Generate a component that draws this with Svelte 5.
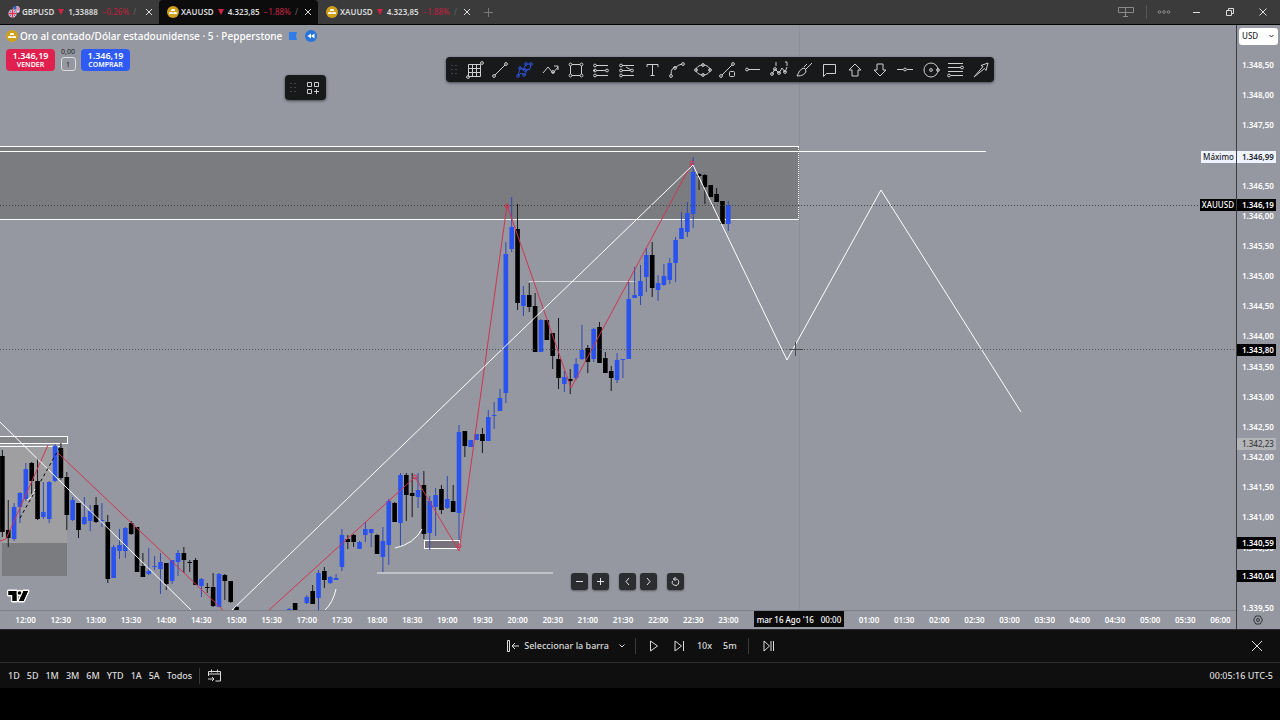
<script>
    const tabs = [
        { symbol: "GBPUSD", price: "1,33888", change: "−0.26%", icon: "gbp" },
        { symbol: "XAUUSD", price: "4.323,85", change: "−1.88%", icon: "gold" },
        { symbol: "XAUUSD", price: "4.323,85", change: "−1.88%", icon: "gold" },
    ];
    let activeTab = $state(1);
    let quantity = $state("1");

    const ranges = ["1D", "5D", "1M", "3M", "6M", "YTD", "1A", "5A", "Todos"];

    // one column per half hour, empty where the date label lies on top
    const times = [
        "12:00", "12:30", "13:00", "13:30", "14:00", "14:30", "15:00", "15:30",
        "17:00", "17:30", "18:00", "18:30", "19:00", "19:30", "20:00", "20:30",
        "21:00", "21:30", "22:00", "22:30", "23:00", "", "", "",
        "01:00", "01:30", "02:00", "02:30", "03:00", "03:30", "04:00", "04:30",
        "05:00", "05:30", "06:00",
    ];

    const TOP_PRICE = 1348.5;
    const PX_PER_UNIT = 60.33;

    function format(price) {
        return "1." + (price - 1000).toFixed(2).replace(".", ",");
    }

    function priceY(price) {
        return 41 + (TOP_PRICE - price) * PX_PER_UNIT;
    }

    const prices = Array.from({ length: 19 }, (_, i) => TOP_PRICE - i * 0.5);

    const badges = [
        { price: 1346.99, kind: "high", label: "Máximo" },
        { price: 1346.19, kind: "dark", label: "XAUUSD" },
        { price: 1343.8, kind: "dark" },
        { price: 1342.23, kind: "muted" },
        { price: 1340.59, kind: "dark" },
        { price: 1340.04, kind: "dark" },
    ];

    // slot, high, body top, body bottom, low, up
    const candles = [
        [0, 450, 456, 532, 537, 0], [1, 500, 530, 538, 547, 0],
        [2, 503, 507, 539, 541, 1], [3, 492, 493, 507, 523, 1],
        [4, 463, 469, 499, 501, 1], [5, 462, 463, 481, 494, 0],
        [6, 458, 481, 519, 520, 0], [7, 482, 512, 517, 519, 1],
        [8, 481, 482, 519, 523, 1], [9, 444, 446, 481, 482, 1],
        [10, 443, 448, 478, 480, 0], [11, 472, 477, 515, 530, 0],
        [12, 497, 500, 520, 521, 1], [13, 503, 503, 530, 538, 0],
        [14, 497, 517, 524, 525, 1], [15, 505, 511, 521, 531, 1],
        [16, 497, 505, 522, 523, 0], [17, 503, 520, 521, 527, 1],
        [18, 515, 522, 579, 583, 0], [19, 545, 547, 578, 578, 1],
        [20, 529, 545, 551, 559, 1], [21, 527, 528, 551, 558, 1],
        [22, 521, 523, 534, 535, 0], [23, 527, 527, 572, 572, 0],
        [24, 553, 566, 577, 577, 0], [25, 548, 571, 574, 575, 1],
        [26, 556, 566, 567, 570, 1], [27, 553, 562, 569, 594, 1],
        [28, 563, 563, 584, 590, 0], [29, 560, 560, 581, 584, 1],
        [30, 550, 553, 562, 576, 1], [31, 547, 553, 560, 573, 0],
        [32, 560, 562, 563, 572, 0], [33, 558, 560, 585, 585, 0],
        [34, 578, 579, 586, 597, 1], [35, 583, 587, 588, 593, 0],
        [36, 573, 587, 606, 607, 0], [37, 573, 574, 607, 607, 1],
        [38, 574, 575, 581, 600, 0], [39, 581, 581, 602, 603, 0],
        [40, 606, 607, 612, 612, 0], [49, 608, 609, 611, 611, 1],
        [50, 603, 603, 611, 611, 0], [51, 610, 610, 611, 611, 0],
        [52, 595, 597, 603, 604, 1], [53, 585, 591, 604, 604, 0],
        [54, 570, 573, 598, 610, 1], [55, 567, 571, 580, 588, 0],
        [56, 576, 577, 583, 584, 1], [57, 574, 578, 580, 580, 1],
        [58, 529, 535, 567, 571, 1], [59, 535, 539, 542, 549, 0],
        [60, 534, 535, 542, 547, 0], [61, 541, 542, 549, 549, 1],
        [62, 522, 529, 535, 542, 1], [63, 529, 529, 533, 547, 1],
        [64, 534, 535, 554, 554, 0], [65, 527, 541, 557, 572, 1],
        [66, 499, 501, 545, 565, 1], [67, 502, 503, 522, 522, 0],
        [68, 473, 475, 523, 546, 1], [69, 473, 475, 495, 521, 0],
        [70, 473, 493, 496, 517, 0], [71, 473, 490, 497, 508, 1],
        [72, 471, 485, 534, 539, 0], [73, 496, 501, 533, 550, 1],
        [74, 488, 495, 507, 536, 1], [75, 485, 489, 510, 514, 0],
        [76, 476, 499, 508, 509, 1], [77, 485, 501, 512, 512, 0],
        [78, 425, 432, 513, 540, 1], [79, 431, 431, 446, 457, 0],
        [80, 440, 440, 447, 447, 1], [81, 434, 434, 440, 440, 1],
        [82, 428, 434, 441, 453, 0], [83, 410, 417, 441, 441, 1],
        [84, 402, 415, 416, 429, 1], [85, 389, 398, 411, 411, 1],
        [86, 242, 254, 393, 403, 1], [87, 197, 227, 249, 252, 1],
        [88, 204, 229, 303, 310, 0], [89, 286, 295, 306, 316, 1],
        [90, 283, 295, 307, 312, 0], [91, 293, 306, 352, 352, 0],
        [92, 319, 320, 352, 352, 1], [93, 320, 320, 340, 340, 0],
        [94, 333, 333, 356, 369, 0], [95, 318, 359, 378, 389, 0],
        [96, 371, 377, 384, 392, 1], [97, 369, 379, 381, 394, 0],
        [98, 358, 364, 378, 380, 1], [99, 325, 350, 359, 360, 1],
        [100, 345, 348, 362, 373, 0], [101, 328, 329, 359, 362, 1],
        [102, 322, 327, 363, 363, 0], [103, 352, 358, 373, 373, 0],
        [104, 366, 371, 378, 391, 0], [105, 353, 360, 380, 383, 1],
        [106, 359, 359, 360, 378, 1], [107, 282, 299, 359, 359, 1],
        [108, 267, 295, 298, 298, 1], [109, 265, 281, 296, 305, 1],
        [110, 248, 255, 277, 292, 1], [111, 242, 255, 288, 297, 0],
        [112, 275, 283, 290, 301, 1], [113, 264, 276, 285, 286, 1],
        [114, 258, 263, 280, 284, 1], [115, 237, 240, 263, 282, 1],
        [116, 212, 228, 239, 239, 1], [117, 202, 213, 232, 237, 1],
        [118, 157, 172, 214, 228, 1], [119, 173, 174, 176, 190, 0],
        [120, 174, 175, 187, 204, 0], [121, 185, 185, 197, 197, 0],
        [122, 188, 194, 202, 202, 0], [123, 201, 201, 224, 224, 0],
        [124, 201, 205, 224, 231, 1],
    ];

    function slotX(slot) {
        return 2.4 + slot * 5.854;
    }

    const tools = [
        { name: "Caja de Gann", d: "M2.500 3.500h12v12h-12zM2.500 7.500h12M2.500 11.500h12M6.500 3.500v12M10.500 3.500v12", dots: [[2, 16], [16, 2]] },
        { name: "Línea de tendencia", d: "M4 14L14 4", dots: [[3, 15], [15, 3]] },
        { name: "Patrón", d: "M2 15L4 7L7 9L10 3L15 3L14 8L11 9L9 14L5 12ZM4 7L10 9L14 8", dots: [[4, 7], [10, 3], [15, 3], [9, 9], [2, 15], [8, 14]], active: true },
        { name: "Polilínea", d: "M1 12L6 6L11 12L16 6M12 5h4v4", dots: [[11, 11]] },
        { name: "Rectángulo", d: "M5 3.500h8M5 14.500h8M3.500 5v8M14.500 5v8", dots: [[3.5, 3.5], [14.5, 3.5], [3.5, 14.5], [14.5, 14.5]] },
        { name: "Retroceso de Fibonacci", d: "M4 4.500h12M4 9.500h10M4 14.500h12M1 9.500h2", dots: [[3, 4.5], [3, 9.5], [15, 9.5], [3, 14.5]] },
        { name: "Extensión de Fibonacci", d: "M4 4.500h12M4 9.500h8M4 14.500h12M8 6L13 9", dots: [[3, 4.5], [3, 9.5], [14, 9.5], [3, 14.5]] },
        { name: "Texto", d: "M4 6V3.500h11v2.500M9.500 3.500v11M7.500 14.500h4", dots: [] },
        { name: "Curva", d: "M3 14Q3 6 8 6M8 6Q10 4 14 3", dots: [[3, 15], [7, 7], [15, 3]] },
        { name: "Elipse", d: "M2 9a7 5 0 0 1 14 0a7 5 0 0 1-14 0", dots: [[9, 4], [9, 14], [2, 9], [16, 9]] },
        { name: "Trazado con forma", d: "M3 14L13 4M11.500 10.500h3q1 0 1 1v3q0 1-1 1h-3q-1 0-1-1v-3q0-1 1-1z", dots: [[2, 15], [14, 3]] },
        { name: "Rayo horizontal", d: "M4 8.500h12", dots: [[3, 8.5]] },
        { name: "Onda de Elliott", d: "M2 13L5 8L9 12L12 7L15 11L17 6M6 1v4M15 1h2v4", dots: [[2, 13], [5, 8], [9, 12], [15, 11]] },
        { name: "Pincel", d: "M2 15Q4 9 8 7Q11 7 11 10Q10 15 2 15M11 8L17 2M9 6L12 3", dots: [] },
        { name: "Comentario", d: "M3.500 3.500h12v9h-9l-3 3z", dots: [] },
        { name: "Flecha arriba", d: "M9 3L15 9H12V15H6V9H3Z", dots: [] },
        { name: "Flecha abajo", d: "M9 15L15 9H12V3H6V9H3Z", dots: [] },
        { name: "Línea horizontal", d: "M1 8.500h6M11 8.500h6", dots: [[9, 8.5]] },
        { name: "Círculo", d: "M2 9a7 7 0 0 1 14 0a7 7 0 0 1-14 0", dots: [[9, 9], [16, 9]] },
        { name: "Canal de Fibonacci", d: "M1 2.500h15M1 6.500h13M1 10.500h15M4 14.500h12", dots: [[15, 6.5], [2, 14.5]] },
        { name: "Flecha", d: "M2 16L11 5.500L9 4.500L16 2L14 9.500L12.500 7.500Z", dots: [] },
    ];
</script>

{#snippet symbolIcon(kind)}
    <svg class="symbol-icon" viewBox="0 0 12 12" aria-hidden="true">
        {#if kind === "gold"}
            <circle cx="6" cy="6" r="6" fill="#cfa01c" />
            <path d="M4.500 3h3l.6 2h-4.200zM2.500 6h3l.5 2h-4zM6.600 6h3l.5 2h-4z" fill="#fff" />
        {:else}
            <circle cx="8.500" cy="3.500" r="3.500" fill="#dfe3f2" />
            <path d="M8.500 2h3.300M8.500 4h3.400" stroke="#e0425c" />
            <path d="M6 0h2.500v3.500h-3z" fill="#2d5bc4" />
            <circle cx="4.500" cy="7.500" r="4.300" fill="#e7d9e6" stroke="#3d3d3d" stroke-width=".5" />
            <path d="M4.500 3.500v8M.5 7.500h8" stroke="#e0304f" stroke-width="1.500" />
            <path d="M1.500 5l1.500 1M7.500 5l-1.500 1M1.500 10l1.500-1M7.500 10l-1.500-1" stroke="#3e5bb8" />
        {/if}
    </svg>
{/snippet}

<div class="app">
    <header class="tab-bar">
        <nav class="tabs">
            {#each tabs as tab, index}
                <div class="tab" class:active={index === activeTab}>
                    <button class="tab-label" onclick={() => (activeTab = index)}>
                        {@render symbolIcon(tab.icon)}
                        <span>{tab.symbol}</span>
                        <svg class="down" width="6" height="6" viewBox="0 0 6 6"><path d="M0 0h6l-3 6z" /></svg>
                        <span>{tab.price}</span>
                        <span class="change">{tab.change}</span>
                        <span class="slash">/</span>
                    </button>
                    <button class="icon-button close" aria-label="Cerrar pestaña">
                        <svg width="8" height="8" viewBox="0 0 8 8"><path d="M1 1l6 6M7 1l-6 6" /></svg>
                    </button>
                </div>
            {/each}
        </nav>
        <button class="icon-button add" aria-label="Nueva pestaña">
            <svg width="9" height="9" viewBox="0 0 9 9"><path d="M4.500 0v9M0 4.500h9" /></svg>
        </button>
        <div class="window-controls">
            <button class="icon-button dim layout-button" aria-label="Diseño">
                <svg width="16" height="12" viewBox="0 0 16 12"><path d="M.5 1.500h15v5h-15zM7.500 1.500v9M5 10.500h5" /></svg>
            </button>
            <button class="icon-button dim more" aria-label="Más">
                <svg width="14" height="6" viewBox="0 0 14 6"><circle cx="2.500" cy="3" r="1.300" /><circle cx="7" cy="3" r="1.300" /><circle cx="11.500" cy="3" r="1.300" /></svg>
            </button>
            <button class="icon-button" aria-label="Minimizar">
                <svg width="8" height="8" viewBox="0 0 8 8"><path d="M0 4.500h7" /></svg>
            </button>
            <button class="icon-button" aria-label="Restaurar">
                <svg width="8" height="8" viewBox="0 0 8 8"><path d="M.5 2.500h5v5h-5zM2.500 2.500v-2h5v5h-2" /></svg>
            </button>
            <button class="icon-button" aria-label="Cerrar">
                <svg width="8" height="8" viewBox="0 0 8 8"><path d="M.5.5l7 7M7.500.5l-7 7" /></svg>
            </button>
        </div>
    </header>

    <main class="workspace">
        <section class="chart">
            <svg class="plot" aria-label="Gráfico de velas">
                <g transform="translate(0 -25)">
                    <path d="M799.500 25V611" stroke="#8c8f98" />
                    <rect x="2" y="447" width="65" height="96" fill="#9f9fa2" />
                    <rect x="2" y="543" width="65" height="33" fill="#7b7c80" />
                    <rect x="0" y="147" width="799" height="72" fill="#7b7c80" />
                    <rect x="-2" y="436.500" width="69.500" height="7" fill="#85868b" stroke="#fff" />
                    <rect x="424.500" y="540.500" width="35" height="8" fill="#77727c" stroke="#fff" />
                    <g class="white">
                        <path d="M0 146.500H799M0 151.500H986M0 219.500H799M0 446.500H60" />
                        <path d="M798.500 147V219" stroke-dasharray="1 1" />
                        <path d="M529 281.500H636" opacity=".6" />
                        <path d="M377 573H553" opacity=".8" />
                    </g>

                    {#each candles as [slot, high, top, bottom, low, up]}
                        <g class={up ? "up" : "fall"}>
                            <path d="M{slotX(slot)} {high}V{low}" />
                            <rect x={slotX(slot) - 2.3} y={top} width="4.6" height={Math.max(bottom - top, 1)} />
                        </g>
                    {/each}

                    <g class="red">
                        <path d="M0 541L6 539L48 445M58 453L224 611M268 611L415 477L459 551L507 205L571 388L692 163" />
                        <circle cx="415" cy="477" r="2" />
                        <circle cx="459" cy="546" r="2" />
                        <circle cx="507" cy="206" r="2" />
                        <circle cx="692" cy="163" r="2" />
                    </g>
                    <g class="white">
                        <path d="M0 422L192 611M231 611L693 165L787 360L881 190L1021 412" />
                        <path d="M395 548Q414 544 422 529M324 611Q333 603 336 589M27 500Q33 497 35 489" />
                    </g>
                    <path d="M20 518L60 447" stroke="#000" stroke-dasharray="3 3" />
                    <g stroke="#3d3e43" stroke-dasharray="1 2">
                        <line x1="0" x2="100%" y1="205.500" y2="205.500" />
                        <line x1="0" x2="100%" y1="349.500" y2="349.500" opacity=".8" />
                    </g>
                    <path d="M795.500 342v14M789 349.500h14" stroke="#4a4a4e" />
                </g>
            </svg>

            <div class="legend">
                <div class="title">
                    {@render symbolIcon("gold")}
                    <h1>Oro al contado/Dólar estadounidense · 5 · Pepperstone</h1>
                    <svg class="flag" width="8" height="8" viewBox="0 0 8 8"><path d="M0 0h8l-1 4l1 4h-8z" fill="#2f7de8" /></svg>
                    <svg width="12" height="12" viewBox="0 0 12 12"><circle cx="6" cy="6" r="6" fill="#2674dc" /><path d="M6 3.500v5l-3.500-2.500zM9.500 3.500v5l-3.500-2.500z" fill="#fff" /></svg>
                </div>
                <div class="orders">
                    <button class="order sell"><span>1.346,19</span><span class="side">VENDER</span></button>
                    <label class="quantity">
                        <span>0,00</span>
                        <input bind:value={quantity} aria-label="Cantidad" />
                    </label>
                    <button class="order buy"><span>1.346,19</span><span class="side">COMPRAR</span></button>
                </div>
            </div>

            <div class="floating templates">
                <svg class="grip" width="6" height="9" viewBox="0 0 6 9"><path d="M1 0v9M5 0v9" /></svg>
                <button class="icon-button" aria-label="Plantillas">
                    <svg width="12" height="12" viewBox="0 0 12 12"><path d="M.5.5h4v4h-4zM7.500.5h4v4h-4zM.5 7.500h4v4h-4zM9.500 7v5M7 9.500h5" /></svg>
                </button>
            </div>

            <div class="floating drawing-tools">
                <svg class="grip" width="6" height="9" viewBox="0 0 6 9"><path d="M1 0v9M5 0v9" /></svg>
                {#each tools as tool}
                    <button class="icon-button tool" class:selected={tool.active} aria-label={tool.name}>
                        <svg width="18" height="18" viewBox="0 0 18 18">
                            <path d={tool.d} />
                            {#each tool.dots as [cx, cy]}
                                <circle {cx} {cy} r="1.400" />
                            {/each}
                        </svg>
                    </button>
                {/each}
            </div>

            <svg class="brand" width="24" height="16" viewBox="0 0 24 16" aria-label="TradingView">
                <g fill="#000" stroke="#fff" stroke-width="3" stroke-linejoin="round" paint-order="stroke">
                    <path d="M2.500 3h8v10h-4v-6h-4zM17.500 3h4.500l-4.500 10h-4.500z" />
                    <circle cx="13.500" cy="5" r="1.800" />
                </g>
                <path d="M2.500 3h8v10h-4v-6h-4zM17.500 3h4.500l-4.500 10h-4.500z" fill="#000" />
            </svg>

            <div class="zoom-controls">
                <button aria-label="Alejar"><svg width="9" height="9" viewBox="0 0 9 9"><path d="M1 4.500h7" /></svg></button>
                <button aria-label="Acercar"><svg width="9" height="9" viewBox="0 0 9 9"><path d="M1 4.500h7M4.500 1v7" /></svg></button>
                <button class="apart" aria-label="Izquierda"><svg width="9" height="9" viewBox="0 0 9 9"><path d="M6 1l-3 3.500l3 3.500" /></svg></button>
                <button aria-label="Derecha"><svg width="9" height="9" viewBox="0 0 9 9"><path d="M3 1l3 3.500l-3 3.500" /></svg></button>
                <button class="apart" aria-label="Restablecer"><svg width="9" height="9" viewBox="0 0 9 9"><path d="M1.500 4a3.200 3.200 0 1 0 3.500-2h-2.500M4.500 0l-2 2l2 2" /></svg></button>
            </div>
        </section>

        <aside class="price-axis">
            <div class="currency">
                <select aria-label="Moneda"><option>USD</option></select>
                <svg width="5" height="4" viewBox="0 0 5 4"><path d="M.5 1l2 2l2-2" /></svg>
            </div>
            <ol>
                {#each prices as price}
                    <li>{format(price)}</li>
                {/each}
            </ol>
            {#each badges as badge}
                <div class="badge {badge.kind}" style="top: {priceY(badge.price)}px">
                    {#if badge.label}<span class="badge-label">{badge.label}</span>{/if}
                    <span class="badge-price">{format(badge.price)}</span>
                </div>
            {/each}
        </aside>

        <div class="time-axis">
            {#each times as time}
                <span>{time}</span>
            {/each}
            <div class="time-badge"><span>mar 16 Ago '16</span><span>00:00</span></div>
        </div>
        <button class="icon-button axis-settings" aria-label="Ajustes del eje">
            <svg width="10" height="10" viewBox="0 0 10 10"><path d="M2.800 1h4.400l2.300 4l-2.300 4h-4.400l-2.300-4z" /><circle cx="5" cy="5" r="1.500" /></svg>
        </button>
    </main>

    <section class="replay">
        <div class="replay-controls">
            <button class="select-bar">
                <svg width="12" height="12" viewBox="0 0 12 12"><path d="M.5.5h2v11h-2zM5 6h7M8 3l-3 3l3 3" /></svg>
                Seleccionar la barra
                <svg class="caret" width="6" height="4" viewBox="0 0 6 4"><path d="M.5.5l2.500 2.500l2.500-2.500" /></svg>
            </button>
            <span class="divider"></span>
            <button class="icon-button play" aria-label="Reproducir">
                <svg width="10" height="12" viewBox="0 0 10 12"><path d="M1.500 1v10l7-5z" /></svg>
            </button>
            <button class="icon-button step" aria-label="Avanzar">
                <svg width="10" height="12" viewBox="0 0 10 12"><path d="M1 1v10l6.500-5zM9.500 1v10" /></svg>
            </button>
            <button class="text-button">10x</button>
            <button class="text-button">5m</button>
            <span class="divider"></span>
            <button class="icon-button live" aria-label="Ir a tiempo real">
                <svg width="11" height="12" viewBox="0 0 11 12"><path d="M1 1v10l5.500-5zM8 1v10M10.500 1v10" /></svg>
            </button>
        </div>
        <button class="icon-button" aria-label="Cerrar reproducción">
            <svg width="10" height="10" viewBox="0 0 10 10"><path d="M0 0l10 10M10 0l-10 10" /></svg>
        </button>
    </section>

    <footer class="range-bar">
        {#each ranges as range}
            <button class="text-button">{range}</button>
        {/each}
        <span class="divider"></span>
        <button class="icon-button" aria-label="Ir a">
            <svg width="13" height="14" viewBox="0 0 13 14"><path d="M.5 7v-4.500h12v9.500h-5M.5 5h12M3.500.5v3M9.500.5v3M0 10h6M4 8l2 2l-2 2" /></svg>
        </button>
        <span class="clock">00:05:16 UTC-5</span>
    </footer>
</div>

<style>
    :global(body) {
        margin: 0;
        background: #000;
    }

    .app {
        font-family: "Noto Sans", "Open Sans", sans-serif;
        font-size: 9px;
        line-height: 12px;
        color: #dcdcdc;
        min-height: 100vh;
        display: flex;
        flex-direction: column;
        overflow: hidden;
    }

    button,
    input,
    select {
        font: inherit;
        color: inherit;
        background: none;
        border: 0;
        padding: 0;
        margin: 0;
        cursor: pointer;
    }

    svg {
        flex: none;
        fill: none;
    }

    .icon-button {
        display: flex;
        align-items: center;
        justify-content: center;
        stroke: currentColor;
    }

    .symbol-icon {
        width: 12px;
        height: 12px;
    }

    .divider {
        width: 1px;
        height: 16px;
        background: #3a3a3a;
    }

    .tab-bar {
        display: flex;
        align-items: center;
        height: 24px;
        background: #3b3b3b;
        border-bottom: 1px solid #000;
    }

    .tabs {
        display: flex;
        align-self: stretch;
    }

    .tab {
        display: flex;
        align-items: center;
        justify-content: space-between;
        box-sizing: border-box;
        width: 159px;
        padding: 0 6px 0 8px;
        border-radius: 4px 4px 0 0;
    }

    .tab.active {
        background: #0c0c0c;
    }

    .tab-label {
        display: flex;
        align-items: center;
        gap: 4px;
        font-size: 8px;
        font-weight: 600;
        white-space: nowrap;
    }

    .tab-label .symbol-icon {
        margin-right: -2px;
    }

    .down {
        fill: #cf2446;
    }

    .change {
        color: #b5233f;
        font-weight: 500;
    }

    .slash {
        color: #666;
        font-weight: 400;
    }

    .add {
        margin-left: 7px;
        color: #777;
    }

    .window-controls {
        display: flex;
        align-items: center;
        margin-left: auto;
        margin-right: 13px;
        gap: 25px;
    }

    .dim {
        color: #8a8a8a;
    }

    .layout-button {
        margin-right: 3px;
    }

    .more {
        border-left: 1px solid #555;
        padding: 4px 0 4px 10px;
        margin-left: -16px;
        margin-right: -3px;
    }

    .workspace {
        display: grid;
        grid-template-columns: minmax(0, 1fr) 44px;
        grid-template-rows: auto 18px;
        background: #9598a1;
    }

    .chart {
        position: relative;
        overflow: hidden;
        border-bottom: 1px solid #7d8088;
    }

    .plot {
        display: block;
        width: 100%;
        height: 585px;
    }

    .white {
        stroke: #fff;
    }

    .red {
        stroke: #cf3552;
    }

    .up {
        stroke: #3048b4;
    }

    .up rect {
        fill: #2952ee;
        stroke: none;
    }

    .fall {
        stroke: #17181c;
    }

    .fall rect {
        fill: #000;
        stroke: none;
    }

    .legend {
        position: absolute;
        top: 4px;
        left: 6px;
    }

    .title {
        display: flex;
        align-items: center;
        gap: 2px;
        height: 14px;
    }

    h1 {
        margin: 0;
        font-size: 10px;
        font-weight: 500;
        color: #fff;
        white-space: nowrap;
    }

    .flag {
        margin: 0 6px 0 5px;
    }

    .orders {
        display: flex;
        align-items: flex-end;
        gap: 5px;
        margin-top: 4px;
    }

    .order {
        display: flex;
        flex-direction: column;
        align-items: center;
        justify-content: center;
        width: 49px;
        height: 22px;
        border-radius: 4px;
        color: #fff;
        font-weight: 600;
        line-height: 9px;
        font-size: 9px;
    }

    .side {
        font-size: 7px;
    }

    .sell {
        background: #e0204e;
    }

    .buy {
        background: #2f5bf4;
    }

    .quantity {
        display: flex;
        flex-direction: column;
        align-items: center;
        width: 16px;
        font-size: 7px;
        line-height: 10px;
        color: #202125;
    }

    .quantity input {
        box-sizing: border-box;
        width: 15px;
        height: 14px;
        border: 1px solid #dcdde2;
        border-radius: 3px;
        text-align: center;
    }

    .floating {
        position: absolute;
        display: flex;
        align-items: center;
        box-sizing: border-box;
        height: 25px;
        border-radius: 4px;
        background: #17191a;
        color: #cfcfcf;
        box-shadow: 0 1px 3px #0008;
    }

    .grip {
        stroke: #6a6a6a;
        stroke-dasharray: 1 3;
        margin-left: 5px;
    }

    .templates {
        top: 50px;
        left: 285px;
        width: 41px;
        gap: 11px;
    }

    .drawing-tools {
        top: 32px;
        left: 446px;
        width: 548px;
    }

    .drawing-tools .grip {
        margin-right: 5px;
    }

    .tool {
        flex: 1;
    }

    .selected {
        color: #2c4fd0;
    }

    .brand {
        position: absolute;
        left: 6px;
        bottom: 6px;
    }

    .zoom-controls {
        position: absolute;
        left: 571px;
        bottom: 20px;
        display: flex;
        gap: 4px;
    }

    .zoom-controls button {
        display: flex;
        align-items: center;
        justify-content: center;
        width: 17px;
        height: 17px;
        border-radius: 3px;
        background: #2c2d30;
        stroke: #e4e4e4;
        box-shadow: 0 1px 2px #0006;
    }

    .zoom-controls .apart {
        margin-left: 6px;
    }

    .price-axis {
        position: relative;
        grid-column: 2;
        grid-row: 1 / span 2;
        box-sizing: border-box;
        height: 604px;
        border-left: 1px solid #3c3d42;
        color: #fff;
        font-size: 8px;
        font-weight: 600;
    }

    .currency {
        display: flex;
        align-items: center;
        height: 18px;
        width: 39px;
        padding: 2px 0 5px 2px;
    }

    .currency select {
        appearance: none;
        width: 39px;
        height: 17px;
        padding-left: 3px;
        border-radius: 3px;
        background: #fff;
        color: #2a2c33;
        font-weight: 500;
        flex: none;
    }

    .currency svg {
        margin-left: -9px;
        stroke: #222;
        pointer-events: none;
    }

    ol {
        display: grid;
        grid-template-rows: repeat(19, 1fr);
        height: 573px;
        margin: 0;
        padding: 0 0 0 5px;
        list-style: none;
    }

    li {
        display: flex;
        align-items: center;
    }

    .badge {
        position: absolute;
        right: 4px;
        display: flex;
        height: 12px;
        line-height: 12px;
        margin-top: -6px;
    }

    .badge-label {
        padding: 0 2px;
        border-right: 1px solid #3c3d42;
        font-weight: 500;
    }

    .badge-price {
        box-sizing: border-box;
        width: 39px;
        padding-left: 5px;
        background: inherit;
    }

    .high {
        background: #eef3ff;
        color: #1c1e26;
    }

    .dark {
        background: #000;
        color: #fff;
    }

    .muted {
        background: #b4b5b9;
        color: #3a3b40;
        font-weight: 500;
    }

    .time-axis {
        position: relative;
        grid-column: 1;
        grid-row: 2;
        display: grid;
        grid-template-columns: repeat(35, minmax(0, 1fr));
        align-items: center;
        margin-left: 8px;
        margin-right: -2px;
        color: #fff;
        font-size: 8px;
        font-weight: 600;
    }

    .time-axis > span {
        display: flex;
        justify-content: center;
    }

    .time-badge {
        position: absolute;
        left: 746px;
        top: 0;
        display: flex;
        justify-content: center;
        gap: 7px;
        width: 90px;
        height: 16px;
        line-height: 18px;
        background: #0a0a0a;
        font-weight: 500;
    }

    .axis-settings {
        position: relative;
        grid-column: 2;
        grid-row: 2;
        color: #33343a;
    }

    .replay {
        display: flex;
        align-items: center;
        height: 32px;
        padding-right: 18px;
        background: #0f0f0f;
        border-top: 1px solid #2a2a2a;
        border-bottom: 1px solid #2c2c2c;
    }

    .replay-controls {
        display: flex;
        align-items: center;
        justify-content: center;
        flex: 1;
        padding-left: 29px;
    }

    .select-bar {
        display: flex;
        align-items: center;
        gap: 5px;
        margin-right: 10px;
        font-weight: 500;
        stroke: currentColor;
    }

    .caret {
        margin-left: 5px;
    }

    .play {
        margin: 0 15px 0 13px;
    }

    .step {
        margin-right: 13px;
    }

    .text-button {
        font-weight: 500;
    }

    .replay .text-button {
        margin-right: 11px;
    }

    .live {
        margin-left: 14px;
    }

    .range-bar {
        display: flex;
        align-items: center;
        gap: 7px;
        height: 25px;
        padding: 0 7px 0 8px;
        background: #0f0f0f;
    }

    .range-bar .icon-button {
        margin-left: 1px;
    }

    .clock {
        margin-left: auto;
        font-weight: 500;
    }
</style>
